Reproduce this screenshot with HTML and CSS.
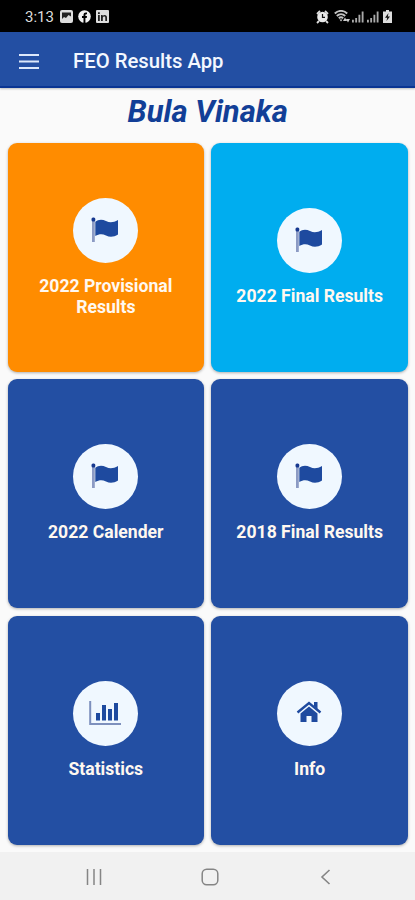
FILE: index.html
```html
<!DOCTYPE html>
<html lang="en">
<head>
    <meta charset="UTF-8">
    <meta name="viewport" content="width=device-width, initial-scale=1.0">
    <title>FEO Results App</title>
    <link rel="stylesheet" href="styles.css">
</head>
<body>
    <svg width="0" height="0" class="defs">
        <symbol id="flag" viewBox="0 0 30 28">
            <path d="M2 4h2.800v22H2z" fill="#8c9bc4"/>
            <rect x="1.500" y="1.500" width="3.800" height="4" rx="1.500" fill="#16388f"/>
            <path d="M5.300 5.800C8 3.500 12 3 16 5s7.500 1.500 12-1v14.500c-4 2.500-8 3-12 1s-7-1.500-10.700.500z" fill="#1e4a9f"/>
        </symbol>
        <symbol id="signal" viewBox="0 0 13 13">
            <path d="M0 10h2v3H0zM3.500 8h2v5h-2zM7 4.500h2V13H7zM10.500 1h2v12h-2z" fill="#aaa"/>
        </symbol>
    </svg>

    <div class="status-bar">
        <span class="time">3:13</span>
        <svg class="notif" viewBox="0 0 13 13">
            <rect width="13" height="13" rx="2" fill="#ddd"/>
            <path d="M2 2.500h9v4L8.500 5 6 8 4 7l-2 2z" fill="#222"/>
        </svg>
        <svg class="notif" viewBox="0 0 13 13">
            <circle cx="6.500" cy="6.500" r="6.300" fill="#f2f2f2"/>
            <path d="M5.500 13V8H4V6h1.500V5c0-1.700 1-2.500 2.400-2.500H9v1.800h-.8c-.6 0-.8.3-.8.800V6H9l-.3 2H7.400v5z" fill="#000"/>
        </svg>
        <svg class="notif" viewBox="0 0 13 13">
            <rect width="13" height="13" rx="1" fill="#ddd"/>
            <path d="M2 5h1.800v6H2zM2 2.300h1.800V4H2zM5 5h1.700v.9C7.200 5.200 7.800 4.900 8.600 4.900c1.600 0 2.400 1 2.400 2.700V11H9.300V7.800c0-.9-.4-1.400-1.100-1.400-.9 0-1.400.6-1.400 1.500V11H5z" fill="#222"/>
        </svg>
        <div class="status-right">
            <svg width="13" height="14" viewBox="0 0 13 14">
                <path d="M1 4l3-3M12 4L9 1M3 11l-2 2M10 11l2 2" stroke="#ddd" stroke-width="1.800"/>
                <circle cx="6.500" cy="7" r="5.300" fill="#e8e8e8"/>
                <path d="M6.500 4v3.300H9" fill="none" stroke="#111" stroke-width="1.200"/>
            </svg>
            <svg class="wifi" width="16" height="13" viewBox="0 0 16 13">
                <path d="M.8 3.500c3.500-3.500 8.900-3.500 12.400 0M2.800 6c2.500-2.400 6-2.400 8.400 0M4.800 8.300c1.400-1.200 3-1.200 4.400 0" fill="none" stroke="#c4c4c4" stroke-width="1.900"/>
                <path d="M5.500 9.500h3L7 11.500zM9 11l2-3.500 2 3.500zM12 9h4l-2 3.500z" fill="#ccc"/>
            </svg>
            <svg class="sim" width="12" height="13"><use href="#signal"/></svg>
            <svg class="sim" width="12" height="13"><use href="#signal"/></svg>
            <svg class="battery" width="9" height="13" viewBox="0 0 9 13">
                <path d="M3 0h3v1.500h3V13H0V1.500h3z" fill="#ddd"/>
                <path d="M5.500 3L2 7.800h2.200L3.500 11 7 6.500H4.800z" fill="#111"/>
            </svg>
        </div>
    </div>

    <header class="app-bar">
        <svg class="menu" width="20" height="16" viewBox="0 0 20 16">
            <path d="M0 2h20M0 8.500h20M0 15h20" stroke="#dce8fb" stroke-width="2"/>
        </svg>
        <span class="app-title">FEO Results App</span>
    </header>

    <main class="content">
        <h1>Bula Vinaka</h1>
        <div class="grid">
            <div class="card orange">
                <div class="circle"><svg class="flag"><use href="#flag"/></svg></div>
                <p>2022 Provisional Results</p>
            </div>
            <div class="card sky">
                <div class="circle"><svg class="flag"><use href="#flag"/></svg></div>
                <p>2022 Final Results</p>
            </div>
            <div class="card">
                <div class="circle"><svg class="flag"><use href="#flag"/></svg></div>
                <p>2022 Calender</p>
            </div>
            <div class="card">
                <div class="circle"><svg class="flag"><use href="#flag"/></svg></div>
                <p>2018 Final Results</p>
            </div>
            <div class="card">
                <div class="circle">
                    <svg class="chart" width="32" height="26" viewBox="0 0 32 26">
                        <path d="M1.200 1v23H32" fill="none" stroke="#7d90bd" stroke-width="2"/>
                        <path d="M7 13h4v7.500H7zM13 5h4v15.500h-4zM19 9h4v11.500h-4zM25 3h4v17.500h-4z" fill="#1e4a9f"/>
                    </svg>
                </div>
                <p>Statistics</p>
            </div>
            <div class="card">
                <div class="circle">
                    <svg class="home" width="26" height="22" viewBox="0 0 26 22">
                        <path d="M1.500 11.500L13 2l11.500 9.500" fill="none" stroke="#1e4a9f" stroke-width="2.400"/>
                        <path d="M18 1h3.500v7L18 5zM13 5.500l8.500 7V21h-6v-6h-5v6h-6v-8.500z" fill="#1e4a9f"/>
                    </svg>
                </div>
                <p>Info</p>
            </div>
        </div>
    </main>

    <nav class="nav-bar">
        <svg width="16" height="16" viewBox="0 0 16 16">
            <path d="M1.500 0v16M8 0v16M14.500 0v16" stroke="#858585" stroke-width="1.500"/>
        </svg>
        <svg width="18" height="18" viewBox="0 0 18 18">
            <rect x="1.200" y="1.200" width="15.600" height="15.600" rx="4.500" fill="none" stroke="#858585" stroke-width="1.500"/>
        </svg>
        <svg width="16" height="16" viewBox="0 0 16 16">
            <path d="M11.500 1L4 8l7.500 7" fill="none" stroke="#858585" stroke-width="1.600"/>
        </svg>
    </nav>
</body>
</html>
```

FILE: styles.css
```css
* {
    box-sizing: border-box;
}

body {
    margin: 0;
    height: 900px;
    display: flex;
    flex-direction: column;
    font-family: Roboto, sans-serif;
    background: #fafafa;
    overflow: hidden;
}

.defs {
    display: none;
}

.status-bar {
    height: 32px;
    display: flex;
    align-items: center;
    padding: 1px 23px 0 25px;
    background: #000;
    color: #ddd;
}

.time {
    width: 35px;
    font-size: 15px;
}

.notif {
    width: 13px;
    height: 13px;
    margin-right: 5px;
}

.status-right {
    display: flex;
    align-items: center;
    margin-left: auto;
}

.wifi {
    margin-left: 5px;
}

.sim {
    margin-left: 2px;
}

.sim + .sim {
    margin-left: 3px;
}

.battery {
    margin-left: 4px;
}

.app-bar {
    height: 56px;
    display: flex;
    align-items: center;
    padding: 4px 18px 0 19px;
    background: #234fa3;
    border-bottom: 2px solid #0a3593;
    box-shadow: 0 1px 2px rgba(0, 0, 0, 0.25);
}

.app-title {
    margin-left: 34px;
    font-size: 20.3px;
    font-weight: 500;
    color: #f4f8ff;
}

.content {
    flex: 1;
    padding: 0 7px 0 7.5px;
}

h1 {
    height: 55px;
    margin: 0;
    text-align: center;
    font-size: 31px;
    line-height: 47px;
    font-weight: 700;
    font-style: italic;
    color: #123f97;
}

.grid {
    display: grid;
    grid-template-columns: 1fr 1fr;
    grid-auto-rows: 229px;
    gap: 7.3px;
}

.card {
    display: flex;
    flex-direction: column;
    align-items: center;
    justify-content: center;
    border-radius: 9px;
    background: #234fa3;
    box-shadow: 0 1px 3px rgba(0, 0, 0, 0.3);
}

.orange {
    background: #ff8c00;
}

.sky {
    background: #00adef;
}

.circle {
    width: 65px;
    height: 65px;
    display: flex;
    align-items: center;
    justify-content: center;
    border-radius: 50%;
    background: #f0f8ff;
}

.flag {
    width: 30px;
    height: 28px;
    margin-right: 1px;
    margin-bottom: 1px;
}

.chart {
    margin-right: 2px;
}

.home {
    margin-right: 1px;
    margin-bottom: 2px;
}

.card p {
    width: 160px;
    margin: 13px 0 0;
    text-align: center;
    font-size: 17.6px;
    line-height: 21px;
    font-weight: 700;
    color: #fff8f0;
}

.nav-bar {
    height: 48px;
    display: flex;
    align-items: center;
    justify-content: space-between;
    padding: 1px 81px 0 86px;
    background: #f1f1f1;
}
```
